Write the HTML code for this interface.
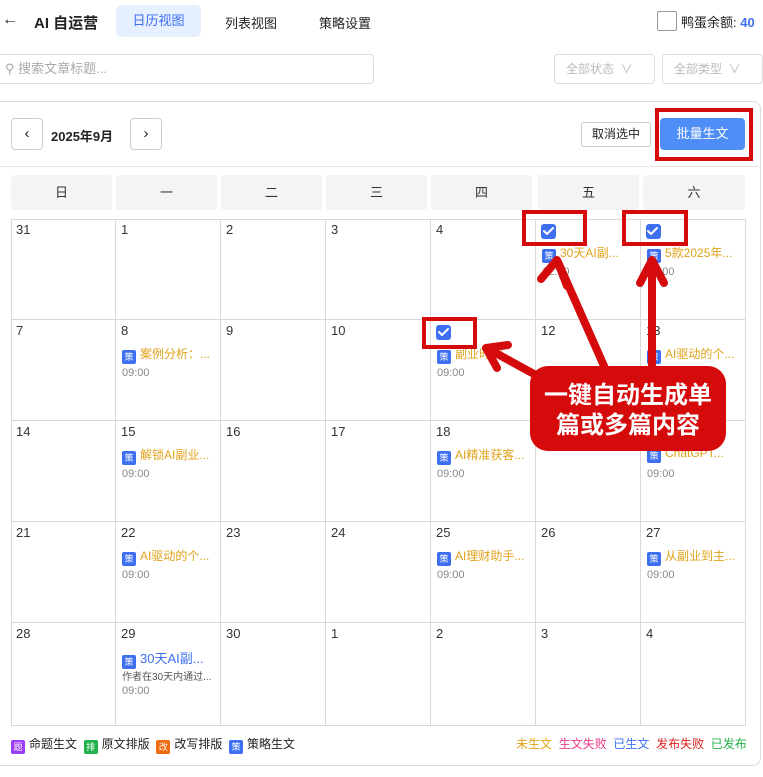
<!DOCTYPE html>
<html><head><meta charset="utf-8"><style>
*{box-sizing:border-box;margin:0;padding:0}
body{width:763px;height:777px;background:#fff;font-family:"Liberation Sans","Noto Sans CJK SC",sans-serif;position:relative;overflow:hidden;color:#222}
.a{position:absolute}
.cell{position:absolute;border-right:1px solid #d9d9d9;border-bottom:1px solid #d9d9d9;width:105px;height:101px}
.d{position:absolute;left:5px;top:3px;font-size:13px;color:#333}
.ev{position:absolute;left:6px;top:25px;font-size:12px;color:#e0a21a;white-space:nowrap}
.ic{display:inline-block;width:14px;height:14px;background:#3d6ff0;color:#fff;font-size:9px;line-height:14px;text-align:center;border-radius:2px;vertical-align:-2px;margin-right:4px}
.t{position:absolute;left:6px;top:47px;font-size:11px;color:#888}
.cb{position:absolute;left:5px;top:5px;width:15px;height:15px;background:#3d6ff0;border-radius:3px}
.hd{position:absolute;top:175px;height:35px;background:#f3f4f6;font-size:13px;text-align:center;line-height:35px;color:#333;border-radius:3px}
</style></head><body>
<div class="a" style="left:2px;top:11px;font-size:16px">←</div>
<div class="a" style="left:34px;top:12px;font-size:15px;font-weight:bold">AI 自运营</div>
<div class="a" style="left:116px;top:5px;width:85px;height:32px;background:#e6f0fe;border-radius:5px;color:#3d6ff0;font-size:13px;text-align:center;line-height:32px">日历视图</div>
<div class="a" style="left:225px;top:13px;font-size:13px">列表视图</div>
<div class="a" style="left:319px;top:13px;font-size:13px">策略设置</div>
<div class="a" style="left:657px;top:11px;width:20px;height:20px;border:1px solid #999;border-radius:2px"></div>
<div class="a" style="left:681px;top:12px;font-size:13px">鸭蛋余额: <b style="color:#3d6ff0">40</b></div>
<div class="a" style="left:-4px;top:54px;width:378px;height:30px;border:1px solid #ddd;border-radius:4px;font-size:13px;color:#aaa;line-height:28px;padding-left:8px">⚲ 搜索文章标题...</div>
<div class="a" style="left:554px;top:54px;width:101px;height:30px;border:1px solid #ddd;border-radius:4px;font-size:12px;color:#bbb;line-height:28px;padding-left:11px">全部状态 &nbsp;∨</div>
<div class="a" style="left:662px;top:54px;width:101px;height:30px;border:1px solid #ddd;border-radius:4px;font-size:12px;color:#bbb;line-height:28px;padding-left:11px">全部类型 &nbsp;∨</div>
<div class="a" style="left:-10px;top:101px;width:771px;height:665px;border:1px solid #ddd;border-radius:8px"></div>
<div class="a" style="left:0;top:166px;width:761px;border-top:1px solid #e5e5e5"></div>
<div class="a" style="left:11px;top:118px;width:32px;height:32px;border:1px solid #ccc;border-radius:4px;text-align:center;line-height:30px;font-size:15px">‹</div>
<div class="a" style="left:51px;top:126px;font-size:13px;font-weight:bold">2025年9月</div>
<div class="a" style="left:130px;top:118px;width:32px;height:32px;border:1px solid #ccc;border-radius:4px;text-align:center;line-height:30px;font-size:15px">›</div>
<div class="a" style="left:581px;top:122px;width:70px;height:25px;border:1px solid #ccc;border-radius:3px;font-size:12px;text-align:center;line-height:23px">取消选中</div>
<div class="a" style="left:660px;top:118px;width:85px;height:32px;background:#4f8ef7;border-radius:4px;color:#fff;font-size:13px;text-align:center;line-height:32px">批量生文</div>

<div class="hd" style="left:11px;width:101px">日</div>
<div class="hd" style="left:116px;width:101px">一</div>
<div class="hd" style="left:221px;width:101px">二</div>
<div class="hd" style="left:326px;width:101px">三</div>
<div class="hd" style="left:431px;width:101px">四</div>
<div class="hd" style="left:538px;width:101px">五</div>
<div class="hd" style="left:643px;width:102px">六</div>

<div class="a" style="left:11px;top:219px;width:735px;height:507px;border-left:1px solid #d9d9d9;border-top:1px solid #d9d9d9"></div>
<div class="cell" style="left:11px;top:219px"><span class="d">31</span></div>
<div class="cell" style="left:116px;top:219px"><span class="d">1</span></div>
<div class="cell" style="left:221px;top:219px"><span class="d">2</span></div>
<div class="cell" style="left:326px;top:219px"><span class="d">3</span></div>
<div class="cell" style="left:431px;top:219px"><span class="d">4</span></div>
<div class="cell" style="left:536px;top:219px"><span class="cb"></span><div class="ev"><span class="ic">策</span>30天AI副...</div><div class="t">12:00</div></div>
<div class="cell" style="left:641px;top:219px;width:105px"><span class="cb"></span><div class="ev"><span class="ic">策</span>5款2025年...</div><div class="t">09:00</div></div>
<div class="cell" style="left:11px;top:320px"><span class="d">7</span></div>
<div class="cell" style="left:116px;top:320px"><span class="d">8</span><div class="ev"><span class="ic">策</span>案例分析：...</div><div class="t">09:00</div></div>
<div class="cell" style="left:221px;top:320px"><span class="d">9</span></div>
<div class="cell" style="left:326px;top:320px"><span class="d">10</span></div>
<div class="cell" style="left:431px;top:320px"><span class="cb"></span><div class="ev"><span class="ic">策</span>副业时间...</div><div class="t">09:00</div></div>
<div class="cell" style="left:536px;top:320px"><span class="d">12</span></div>
<div class="cell" style="left:641px;top:320px;width:105px"><span class="d">13</span><div class="ev"><span class="ic">策</span>AI驱动的个...</div><div class="t">09:00</div></div>
<div class="cell" style="left:11px;top:421px"><span class="d">14</span></div>
<div class="cell" style="left:116px;top:421px"><span class="d">15</span><div class="ev"><span class="ic">策</span>解锁AI副业...</div><div class="t">09:00</div></div>
<div class="cell" style="left:221px;top:421px"><span class="d">16</span></div>
<div class="cell" style="left:326px;top:421px"><span class="d">17</span></div>
<div class="cell" style="left:431px;top:421px"><span class="d">18</span><div class="ev"><span class="ic">策</span>AI精准获客...</div><div class="t">09:00</div></div>
<div class="cell" style="left:536px;top:421px"><span class="d">19</span></div>
<div class="cell" style="left:641px;top:421px;width:105px"><span class="d">20</span><div class="ev"><span class="ic">策</span>ChatGPT...</div><div class="t">09:00</div></div>
<div class="cell" style="left:11px;top:522px"><span class="d">21</span></div>
<div class="cell" style="left:116px;top:522px"><span class="d">22</span><div class="ev"><span class="ic">策</span>AI驱动的个...</div><div class="t">09:00</div></div>
<div class="cell" style="left:221px;top:522px"><span class="d">23</span></div>
<div class="cell" style="left:326px;top:522px"><span class="d">24</span></div>
<div class="cell" style="left:431px;top:522px"><span class="d">25</span><div class="ev"><span class="ic">策</span>AI理财助手...</div><div class="t">09:00</div></div>
<div class="cell" style="left:536px;top:522px"><span class="d">26</span></div>
<div class="cell" style="left:641px;top:522px;width:105px"><span class="d">27</span><div class="ev"><span class="ic">策</span>从副业到主...</div><div class="t">09:00</div></div>
<div class="cell" style="left:11px;top:623px;height:103px"><span class="d">28</span></div>
<div class="cell" style="left:116px;top:623px;height:103px"><span class="d">29</span><div class="ev" style="color:#3d6ff0;font-size:13px"><span class="ic">策</span>30天AI副...</div><div class="t" style="top:45px;color:#555;font-size:10px">作者在30天内通过...</div><div class="t" style="top:62px">09:00</div></div>
<div class="cell" style="left:221px;top:623px;height:103px"><span class="d">30</span></div>
<div class="cell" style="left:326px;top:623px;height:103px"><span class="d">1</span></div>
<div class="cell" style="left:431px;top:623px;height:103px"><span class="d">2</span></div>
<div class="cell" style="left:536px;top:623px;height:103px"><span class="d">3</span></div>
<div class="cell" style="left:641px;top:623px;width:105px;height:103px"><span class="d">4</span></div>

<div class="a" style="left:11px;top:735px;font-size:12px;white-space:nowrap">
<span class="ic" style="background:#9b3df0">题</span>命题生文 &nbsp;<span class="ic" style="background:#22b04a">排</span>原文排版 &nbsp;<span class="ic" style="background:#f06a10">改</span>改写排版 &nbsp;<span class="ic">策</span>策略生文</div>
<div class="a" style="left:516px;top:735px;font-size:12px;white-space:nowrap"><span style="color:#e0a21a">未生文</span>&nbsp; <span style="color:#e93b8a">生文失败</span>&nbsp; <span style="color:#3d6ff0">已生文</span>&nbsp; <span style="color:#e02020">发布失败</span>&nbsp; <span style="color:#22b04a">已发布</span></div>

<svg class="a" style="left:0;top:0" width="763" height="777">
<g fill="none" stroke="#fff" stroke-width="2" stroke-linecap="round" stroke-linejoin="round">
<path d="M544 231l3 3 6-6"/><path d="M648 231l3 3 6-6"/><path d="M439 332l3 3 6-6"/></g>
<g fill="none" stroke="#d50b0b" stroke-width="4">
<rect x="657" y="110" width="94" height="49"/>
<rect x="524" y="212" width="61" height="32"/>
<rect x="624" y="212" width="62" height="32"/>
<rect x="424" y="319" width="51" height="28"/></g>
<g stroke="#d50b0b" stroke-width="8" stroke-linecap="round" fill="none" stroke-linejoin="round">
<path d="M608 375L558 262"/><path d="M541 279L557 260L567 286"/>
<path d="M652 365V262"/><path d="M640 283L652 260L664 283"/>
<path d="M545 380L490 350"/><path d="M497 368L486 348L508 345"/></g>
<rect x="530" y="366" width="196" height="85" rx="18" fill="#d50b0b"/>
<text x="628" y="403" font-size="24" font-weight="bold" fill="#fff" text-anchor="middle" font-family="Liberation Sans,Noto Sans CJK SC,sans-serif">一键自动生成单</text>
<text x="628" y="433" font-size="24" font-weight="bold" fill="#fff" text-anchor="middle" font-family="Liberation Sans,Noto Sans CJK SC,sans-serif">篇或多篇内容</text>
</svg>
</body></html>
